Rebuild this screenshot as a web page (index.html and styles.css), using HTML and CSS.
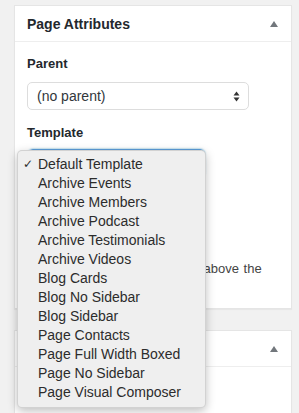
FILE: index.html
```html
<!DOCTYPE html>
<html lang="en">
<head>
    <meta charset="UTF-8">
    <meta name="viewport" content="width=device-width, initial-scale=1.0">
    <title>Page Attributes</title>
    <link rel="stylesheet" href="styles.css">
</head>
<body>
    <div class="postbox">
        <div class="postbox-head">
            <h2>Page Attributes</h2>
            <span class="toggle-arrow"></span>
        </div>
        <div class="postbox-body">
            <p class="field-label">Parent</p>
            <div class="select">
                <span>(no parent)</span>
                <svg class="select-arrows" width="7" height="11" viewBox="0 0 7 11">
                    <path d="M3.5 0.5 L6.5 4.5 L0.5 4.5 Z" fill="#333"/>
                    <path d="M3.5 10.5 L6.5 6.5 L0.5 6.5 Z" fill="#333"/>
                </svg>
            </div>

            <p class="field-label">Template</p>
            <div class="select select-auto select-focus">
                <span>Default Template</span>
            </div>

            <p class="field-label">Order</p>
            <div class="number-input">0</div>

            <p class="help-text">Need help? Use the Help tab above the screen title.</p>

            <!-- open dropdown of the template select -->
            <ul class="dropdown">
                <li class="checked">Default Template</li>
                <li>Archive Events</li>
                <li>Archive Members</li>
                <li>Archive Podcast</li>
                <li>Archive Testimonials</li>
                <li>Archive Videos</li>
                <li>Blog Cards</li>
                <li>Blog No Sidebar</li>
                <li>Blog Sidebar</li>
                <li>Page Contacts</li>
                <li>Page Full Width Boxed</li>
                <li>Page No Sidebar</li>
                <li>Page Visual Composer</li>
            </ul>
        </div>
    </div>

    <div class="postbox">
        <div class="postbox-head">
            <h2>&nbsp;</h2>
            <span class="toggle-arrow"></span>
        </div>
        <div class="postbox-body tall"></div>
    </div>
</body>
</html>
```

FILE: styles.css
```css
* {
    margin: 0;
    padding: 0;
    box-sizing: border-box;
}

body {
    background: #f1f1f1;
    font-family: 'Liberation Sans', Arial, sans-serif;
    color: #23282d;
    overflow: hidden;
}

.postbox {
    width: 278px;
    margin: 5px 0 0 14px;
    background: #fff;
    border: 1px solid #e5e5e5;
    box-shadow: 0 1px 1px rgba(0, 0, 0, 0.04);
}

.postbox + .postbox {
    margin-top: 21px;
}

.postbox-head {
    height: 36px;
    padding: 0 12px;
    border-bottom: 1px solid #eee;
    display: flex;
    align-items: center;
    justify-content: space-between;
}

.postbox-head h2 {
    font-size: 14px;
    font-weight: 700;
    line-height: 20px;
}

.toggle-arrow {
    width: 0;
    height: 0;
    margin-right: 1px;
    border-left: 4px solid transparent;
    border-right: 4px solid transparent;
    border-bottom: 6px solid #72777c;
}

.postbox-body {
    position: relative;
    padding: 13px 12px 12px;
}

.postbox-body.tall {
    height: 80px;
}

.field-label {
    font-size: 13px;
    font-weight: 700;
    line-height: 18px;
    margin-bottom: 9px;
}

.select {
    height: 28px;
    width: 222px;
    padding: 0 8px 0 9px;
    border: 1px solid #ddd;
    border-radius: 5px;
    display: flex;
    align-items: center;
    justify-content: space-between;
    font-size: 14px;
    color: #32373c;
    margin-bottom: 14px;
}

.select-auto {
    width: 177px;
    margin-left: 1px;
}

.select-focus {
    border-color: #5b9dd9;
    box-shadow: 0 0 2px rgba(30, 140, 190, 0.8);
}

.field-label + .select-focus {
    margin-top: -2px;
}

.number-input {
    width: 60px;
    height: 28px;
    border: 1px solid #ddd;
    padding: 5px 8px;
    font-size: 14px;
    margin-bottom: 14px;
}

.help-text {
    font-size: 13px;
    line-height: 18px;
    word-spacing: 1px;
    color: #444;
}

.dropdown {
    position: absolute;
    top: 108px;
    left: 2px;
    width: 189px;
    padding: 4px 0 5px;
    list-style: none;
    background: #efefef;
    border: 1px solid rgba(0, 0, 0, 0.12);
    border-radius: 5px;
    box-shadow: 0 3px 10px rgba(0, 0, 0, 0.25);
}

.dropdown li {
    position: relative;
    padding-left: 20px;
    font-size: 14px;
    line-height: 19px;
    color: #2c2c2c;
    white-space: nowrap;
}

.dropdown li.checked::before {
    content: "\2713";
    position: absolute;
    left: 5px;
    font-family: 'DejaVu Sans', sans-serif;
    font-size: 12px;
}
```
